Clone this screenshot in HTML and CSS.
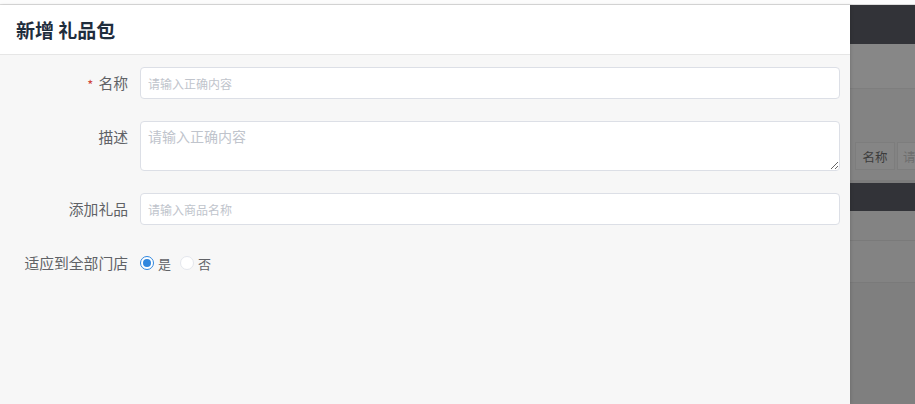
FILE: index.html
```html
<!DOCTYPE html>
<html lang="zh-CN">
<head>
<meta charset="utf-8">
<title>新增 礼品包</title>
<link rel="stylesheet" href="styles.css">
</head>
<body>
<div class="topstrip"></div>
<div class="stage">
  <section class="drawer">
    <header class="drawer-head">
      <h1 class="drawer-title">新增 礼品包</h1>
    </header>
    <form class="form">
      <div class="form-item">
        <label class="form-label"><span class="req">*</span>名称</label>
        <div class="form-control">
          <input class="input" type="text" placeholder="请输入正确内容">
        </div>
      </div>
      <div class="form-item form-item-top">
        <label class="form-label">描述</label>
        <div class="form-control">
          <textarea class="textarea" placeholder="请输入正确内容"></textarea>
        </div>
      </div>
      <div class="form-item">
        <label class="form-label">添加礼品</label>
        <div class="form-control">
          <input class="input" type="text" placeholder="请输入商品名称">
        </div>
      </div>
      <div class="form-item">
        <label class="form-label">适应到全部门店</label>
        <div class="form-control radios">
          <span class="radio"><span class="radio-dot checked"></span><span class="radio-text">是</span></span>
          <span class="radio"><span class="radio-dot"></span><span class="radio-text">否</span></span>
        </div>
      </div>
    </form>
  </section>
  <aside class="backdrop">
    <div class="bd-dark bd-h39"></div>
    <div class="bd-light bd-h45"></div>
    <div class="bd-mid bd-search">
      <span class="bd-tag">名称</span>
      <span class="bd-field">请</span>
    </div>
    <div class="bd-dark bd-h28"></div>
    <div class="bd-row bd-h29"></div>
    <div class="bd-row bd-h42"></div>
    <div class="bd-rest"></div>
  </aside>
</div>
</body>
</html>
```
FILE: styles.css
```css
* { box-sizing: border-box; }
html, body { margin: 0; padding: 0; }
body {
  width: 915px;
  height: 404px;
  overflow: hidden;
  background: #ffffff;
  font-family: "Noto Sans CJK SC", "Noto Sans", sans-serif;
}
.topstrip {
  height: 5px;
  background: #fcfcfc;
  border-bottom: 1px solid #dcdcdc;
}
.stage {
  display: flex;
  height: 399px;
}
.drawer {
  width: 850px;
  flex: none;
  background: #f7f7f7;
  display: flex;
  flex-direction: column;
  position: relative;
  z-index: 1;
  box-shadow: 1px 0 3px rgba(0,0,0,0.12);
}
.drawer-head {
  height: 50px;
  background: #ffffff;
  border-bottom: 1px solid #e6e6e6;
  display: flex;
  align-items: center;
  padding-left: 16px;
}
.drawer-title {
  margin: 0;
  font-size: 19px;
  font-weight: 700;
  color: #1f2d3d;
  line-height: 1;
}
.form {
  padding-top: 12px;
  display: flex;
  flex-direction: column;
  gap: 22px;
}
.form-item {
  display: flex;
  align-items: center;
}
.form-item-top { align-items: flex-start; }
.form-label {
  width: 128px;
  flex: none;
  text-align: right;
  font-size: 14.8px;
  color: #606266;
  line-height: 32px;
  height: 32px;
}
.req {
  color: #d0453a;
  font-size: 13px;
  margin-right: 5px;
  position: relative;
  top: 1px;
}
.form-control {
  margin-left: 12px;
  width: 700px;
}
.input {
  display: block;
  width: 700px;
  height: 32px;
  border: 1px solid #dcdfe6;
  border-radius: 4px;
  background: #ffffff;
  padding: 0 7px;
  font-family: inherit;
  font-size: 12px;
  color: #606266;
  outline: none;
}
.input::placeholder { color: #c0c4cc; }
.textarea {
  display: block;
  width: 700px;
  height: 50px;
  border: 1px solid #dcdfe6;
  border-radius: 4px;
  background: #ffffff;
  padding: 4px 7px;
  font-family: inherit;
  font-size: 14px;
  line-height: 21px;
  color: #606266;
  outline: none;
  resize: vertical;
}
.textarea::placeholder { color: #c0c4cc; }
.radios {
  display: flex;
  align-items: center;
  height: 32px;
}
.radio {
  display: inline-flex;
  align-items: center;
  margin-right: 9px;
}
.radio-dot {
  width: 14px;
  height: 14px;
  border-radius: 50%;
  border: 1px solid #e4e7ed;
  background: #ffffff;
  position: relative;
}
.radio-dot.checked {
  border-color: #2f86de;
}
.radio-dot.checked::after {
  content: "";
  position: absolute;
  left: 2px;
  top: 2px;
  width: 8px;
  height: 8px;
  border-radius: 50%;
  background: #2f86de;
}
.radio-text {
  margin-left: 4px;
  font-size: 13px;
  color: #606266;
}
.backdrop {
  flex: 1;
  display: flex;
  flex-direction: column;
  overflow: hidden;
}
.bd-dark { background: #323338; }
.bd-h39 { height: 39px; }
.bd-h45 { height: 45px; }
.bd-h28 { height: 28px; }
.bd-h29 { height: 30px; border-bottom: 1px solid #7a7a7a; }
.bd-h42 { height: 42px; border-bottom: 1px solid #7a7a7a; }
.bd-light {
  background: #878787;
  border-bottom: 1px solid #7e7e7e;
}
.bd-mid {
  background: #838383;
}
.bd-search {
  height: 94px;
  display: flex;
  align-items: flex-start;
  gap: 2px;
  padding: 53px 0 0 5px;
  border-bottom: 3px solid #7c7c7c;
}
.bd-tag {
  width: 40px;
  height: 28px;
  flex: none;
  border: 1px solid #7d7d7d;
  background: #858585;
  color: #3c3c3c;
  font-size: 12.5px;
  display: flex;
  align-items: center;
  justify-content: center;
}
.bd-field {
  width: 40px;
  height: 28px;
  flex: none;
  border: 1px solid #7d7d7d;
  border-right: none;
  background: #878787;
  color: #6e6e6e;
  font-size: 12.5px;
  display: flex;
  align-items: center;
  padding-left: 5px;
}
.bd-row { background: #838383; }
.bd-rest {
  flex: 1;
  background: #7f7f7f;
}
```
